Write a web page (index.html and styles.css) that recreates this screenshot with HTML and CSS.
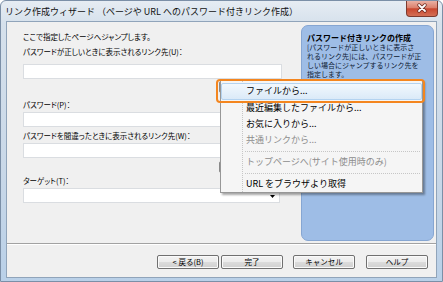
FILE: index.html
```html
<!DOCTYPE html>
<html lang="ja">
<head>
    <meta charset="UTF-8">
    <meta name="viewport" content="width=device-width, initial-scale=1.0">
    <title>リンク作成ウィザード</title>
    <link rel="stylesheet" href="styles.css">
</head>
<body>
<div class="window">
    <div class="titlebar">
        <span class="title">リンク作成ウィザード （ページや URL へのパスワード付きリンク作成）</span>
        <button class="close-btn" type="button">
            <svg width="30" height="15" viewBox="0 0 30 15">
                <path d="M12 4 L18 10 M18 4 L12 10" stroke="#6b2b22" stroke-width="3.4" stroke-linecap="round"/>
                <path d="M12 4 L18 10 M18 4 L12 10" stroke="#ffffff" stroke-width="1.8" stroke-linecap="round"/>
            </svg>
        </button>
    </div>

    <div class="client">
        <div class="wizard-body">
            <div class="form-area">
                <p class="intro">ここで指定したページへジャンプします。</p>
                <label class="field-label label-url">パスワードが正しいときに表示されるリンク先(U)：</label>
                <input class="text-field field-url" type="text">
                <!-- browse buttons sit under the open menu -->
                <button class="browse-btn browse-url" type="button"></button>

                <label class="field-label label-pass">パスワード(P)：</label>
                <input class="text-field field-pass" type="password">

                <label class="field-label label-wrong">パスワードを間違ったときに表示されるリンク先(W)：</label>
                <input class="text-field field-wrong" type="text">
                <button class="browse-btn browse-wrong" type="button"></button>

                <label class="field-label label-target">ターゲット(T)：</label>
                <div class="select-box">
                    <svg width="5" height="3" viewBox="0 0 5 3"><path d="M0 0 H5 L2.5 3 Z" fill="#000"/></svg>
                </div>
            </div>

            <div class="help-panel">
                <h2>パスワード付きリンクの作成</h2>
                <p>[パスワードが正しいときに表示さ<br>れるリンク先]には、パスワードが正<br>しい場合にジャンプするリンク先を<br>指定します。</p>
            </div>
        </div>

        <div class="footer">
            <button class="wiz-btn" type="button">&lt; 戻る(B)</button>
            <button class="wiz-btn btn-finish" type="button">完了</button>
            <button class="wiz-btn btn-cancel" type="button">キャンセル</button>
            <button class="wiz-btn btn-help" type="button">ヘルプ</button>
        </div>
    </div>

    <!-- browse dropdown menu -->
    <div class="context-menu">
        <div class="menu-item active">ファイルから...</div>
        <div class="menu-item">最近編集したファイルから...</div>
        <div class="menu-item">お気に入りから...</div>
        <div class="menu-item disabled">共通リンクから...</div>
        <div class="menu-sep"></div>
        <div class="menu-item disabled">トップページへ(サイト使用時のみ)</div>
        <div class="menu-sep"></div>
        <div class="menu-item">URL をブラウザより取得</div>
    </div>
    <div class="callout"></div>
</div>
</body>
</html>
```

FILE: styles.css
```css
body {
    margin: 0;
    font-family: "Noto Sans CJK JP", "Noto Sans", sans-serif;
    font-size: 7.5px;
    color: #000;
}

/* Window frame */
.window {
    position: relative;
    width: 443px;
    height: 282px;
    box-sizing: border-box;
    border: 1px solid #7b8fa7;
    border-radius: 6px 6px 0 0;
    background: linear-gradient(to bottom, #e6ecf3, #d6e1ec 8%, #c9d8e8 60%, #b9d0e8);
    padding: 0 5px 3px;
    display: flex;
    flex-direction: column;
}

.titlebar {
    height: 20px;
    margin: 0 -5px;
    padding: 0 4px 0 4px;
    display: flex;
    align-items: center;
}

.title {
    flex: 1;
    font-size: 9px;
    color: #111;
}

.close-btn {
    align-self: flex-start;
    width: 32px;
    height: 16px;
    padding: 0;
    border: 1px solid #7d3a2f;
    border-top: none;
    border-radius: 0 0 4px 4px;
    background: linear-gradient(to bottom, #eab1a4, #dc806c 45%, #c9472f 52%, #d36f55);
    display: flex;
    align-items: center;
    justify-content: center;
}

/* Client area */
.client {
    flex: 1;
    background-color: #f0f0f0;
    border: 1px solid #90a4ba;
    display: flex;
    flex-direction: column;
}

.wizard-body {
    display: flex;
    height: 221px;
}

.form-area {
    width: 259px;
    padding: 9px 0 0 16px;
    display: flex;
    flex-direction: column;
    font-feature-settings: "palt";
}

.intro,
.field-label {
    margin: 0;
    line-height: 12px;
    white-space: nowrap;
}

.label-url { margin-top: 3px; }
.label-pass { margin-top: 6px; }
.label-wrong { margin-top: 3px; }
.label-target { margin-top: 2px; }

.text-field {
    height: 15px;
    box-sizing: border-box;
    border: 1px solid #dadde1;
    background: #fff;
    margin: 1px 0 0;
    padding: 0;
}

.field-url { margin-top: 6px; }

.browse-btn {
    align-self: flex-end;
    width: 63px;
    height: 12px;
    padding: 0;
    border: 1px solid #8a8a8a;
    border-radius: 2px;
    background: linear-gradient(to bottom, #f4f4f4, #e2e2e2);
}

.browse-url { margin-top: 2px; }
.browse-wrong { margin-top: 3px; }

.select-box {
    height: 15px;
    margin: 1px 2px 0 0;
    box-sizing: border-box;
    border: 1px solid #dadde1;
    background: #fff;
    display: flex;
    justify-content: flex-end;
    align-items: center;
    padding: 2px 4px 0 0;
}

/* Help panel */
.help-panel {
    flex: 1;
    margin: 3px 2px 2px 19px;
    padding: 7px 4px 0 5px;
    border: 1px solid #86a6d2;
    border-radius: 7px;
    background-color: #9ebde6;
}

.help-panel h2 {
    margin: 0;
    font-size: 8px;
    line-height: 10px;
    font-weight: bold;
}

.help-panel p {
    margin: 0;
    font-size: 7px;
    line-height: 9px;
    color: #0d1a33;
    white-space: nowrap;
}

/* Footer buttons */
.footer {
    flex: 1;
    border-top: 1px solid #a2a2a2;
    box-shadow: inset 0 1px #fff;
    padding: 11px 8px 0 0;
    display: flex;
    justify-content: flex-end;
    align-items: flex-start;
}

.wiz-btn {
    width: 62px;
    height: 14px;
    padding: 0;
    font-family: inherit;
    font-size: 7.5px;
    line-height: 12px;
    color: #000;
    border: 1px solid #707070;
    border-radius: 2px;
    box-shadow: inset 0 0 0 1px #fafafa;
    background: linear-gradient(to bottom, #f3f3f3, #ebebeb 50%, #dcdcdc 50%, #d0d0d0);
}

.btn-finish { margin-left: 2px; }
.btn-cancel { margin-left: 10px; }
.btn-help { margin-left: 11px; }

/* Dropdown menu over the form */
.context-menu {
    position: absolute;
    left: 219px;
    top: 79px;
    width: 203px;
    box-sizing: border-box;
    padding: 3px 0 0;
    border: 1px solid #979797;
    background:
        repeating-linear-gradient(to bottom, #c6c6c6 0 1px, transparent 1px 2px) 21px 0 / 1px 100% no-repeat,
        #f5f5f5;
    box-shadow: 2px 2px 2px rgba(0, 0, 0, 0.35);
}

.menu-item {
    height: 16px;
    box-sizing: border-box;
    border: 1px solid transparent;
    border-radius: 2px;
    padding-left: 24px;
    font-size: 9px;
    line-height: 14px;
    white-space: nowrap;
}

.menu-item.active {
    margin-top: -1px;
    height: 17px;
    border-color: #b4d3f0;
    background: linear-gradient(to bottom, #f2f8fd, #dbeaf8);
}

.menu-item.disabled {
    color: #8d8d8d;
}

.menu-sep {
    height: 1px;
    margin: 3px 2px 2px 24px;
    background: repeating-linear-gradient(to right, #c6c6c6 0 1px, transparent 1px 2px);
}

.callout {
    position: absolute;
    left: 215px;
    top: 78px;
    width: 209px;
    height: 24px;
    box-sizing: border-box;
    border: 2px solid #f4861f;
    border-radius: 4px;
}
```
